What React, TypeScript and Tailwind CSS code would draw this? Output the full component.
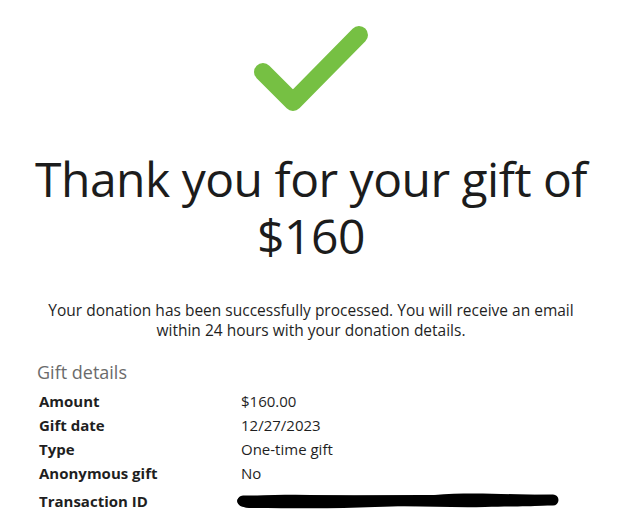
const FONT = { fontFamily: '"Open Sans", "Noto Sans", sans-serif' };

const DETAILS = [
  { label: "Amount", value: "$160.00" },
  { label: "Gift date", value: "12/27/2023" },
  { label: "Type", value: "One-time gift" },
  { label: "Anonymous gift", value: "No" },
];

function Check() {
  return (
    <svg width="140" height="110" viewBox="0 0 140 110" className="block">
      <path
        d="M22 62 L52 92 L118 25"
        fill="none"
        stroke="#76c043"
        strokeWidth="18"
        strokeLinecap="round"
        strokeLinejoin="round"
      />
    </svg>
  );
}

function Redacted() {
  return (
    <svg width="330" height="22" viewBox="0 0 330 22" className="block">
      <path
        d="M4 8 C40 3 80 5 120 6 C150 7 170 10 200 5 C230 2 270 4 300 5 C316 6 324 8 322 12 C318 17 290 16 250 17 C210 18 180 15 140 17 C100 19 50 18 14 18 C2 17 0 10 4 8 Z"
        fill="#000"
      />
      <path d="M8 11 L318 10" stroke="#000" strokeWidth="11" strokeLinecap="round" />
    </svg>
  );
}

export default function App() {
  return (
    <div className="w-[622px] h-[529px] bg-white text-[#1f1f1f] overflow-hidden" style={FONT}>
      <div className="flex justify-center pt-[10px]">
        <Check />
      </div>

      <h1 className="mt-[30px] text-center text-[48px] leading-[57px] tracking-[-0.5px] text-[#1c1c1c]">
        <span className="block">Thank you for your gift of</span>
        <span className="block">$160</span>
      </h1>

      <p className="mt-[36px] text-center text-[15.5px] leading-[20px] px-[30px]">
        Your donation has been successfully processed. You will receive an email
        <br />
        within 24 hours with your donation details.
      </p>

      <div className="mt-[20px] px-[37px]">
        <h2 className="text-[18px] leading-[24px] text-[#6b6b6b]">Gift details</h2>
        <div className="mt-[5px] pl-[2px]">
          {DETAILS.map((d) => (
            <div key={d.label} className="flex h-[24px] items-center text-[15px]">
              <div className="w-[202px] font-bold">{d.label}</div>
              <div>{d.value}</div>
            </div>
          ))}
          <div className="flex h-[28px] items-center pt-[4px] text-[15px]">
            <div className="w-[196px] font-bold">Transaction ID</div>
            <Redacted />
          </div>
        </div>
      </div>
    </div>
  );
}
